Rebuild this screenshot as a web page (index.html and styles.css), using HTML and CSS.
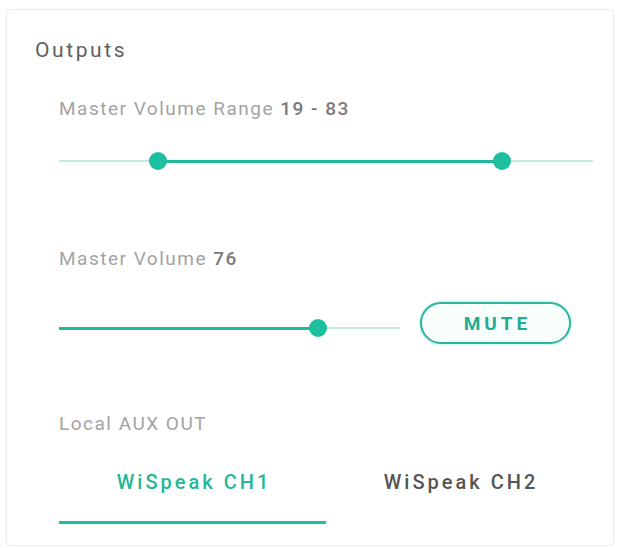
FILE: index.html
```html
<!DOCTYPE html>
<html>
<head>
<meta charset="utf-8">
<link rel="stylesheet" href="styles.css">
</head>
<body>
<div class="card">
  <div class="title">Outputs</div>
  <div class="section">
    <div class="label">Master Volume Range <b>19 - 83</b></div>
    <div class="slider range">
      <div class="track"></div>
      <div class="fill" style="left: 18.5%; width: 64.5%;"></div>
      <div class="thumb" style="left: 18.5%;"></div>
      <div class="thumb" style="left: 83%;"></div>
    </div>
  </div>
  <div class="section vol">
    <div class="label">Master Volume <b>76</b></div>
    <div class="vol-row">
      <div class="slider single">
        <div class="track"></div>
        <div class="fill" style="left: 0; width: 76%;"></div>
        <div class="thumb" style="left: 76%;"></div>
      </div>
      <button class="mute">MUTE</button>
    </div>
  </div>
  <div class="section aux">
    <div class="label">Local AUX OUT</div>
    <div class="tabs">
      <div class="tab active">WiSpeak CH1</div>
      <div class="tab">WiSpeak CH2</div>
    </div>
  </div>
</div>
</body>
</html>
```
FILE: styles.css
```css
* { box-sizing: border-box; }
html, body { margin: 0; padding: 0; background: #ffffff; }
body { font-family: Roboto, "Liberation Sans", sans-serif; }
.card {
  margin: 9px 6px 0 6px;
  width: 608px;
  height: 537px;
  border: 1px solid #ededed;
  border-radius: 4px;
  box-shadow: 0 1px 3px rgba(0,0,0,0.06);
  padding: 26px 20px 0 28px;
}
.title {
  font-size: 21px;
  line-height: 28px;
  letter-spacing: 2.6px;
  color: #606060;
}
.section { padding-left: 24px; }
.label {
  font-size: 19px;
  line-height: 24px;
  letter-spacing: 1.5px;
  color: #a3a3a3;
  margin-top: 33px;
}
.label b { font-weight: 500; color: #7a7a7a; }
.slider {
  position: relative;
  height: 20px;
}
.range { margin-top: 30px; width: 534px; }
.track {
  position: absolute;
  left: 0; right: 0; top: 9px;
  height: 2px;
  background: #c3eae0;
}
.fill {
  position: absolute;
  top: 8.5px;
  height: 3px;
  background: #1fb99a;
}
.thumb {
  position: absolute;
  top: 1px;
  width: 18px; height: 18px;
  margin-left: -9px;
  border-radius: 50%;
  background: #1dbf9e;
}
.vol .label { margin-top: 76px; }
.vol-row {
  display: flex;
  align-items: flex-start;
  margin-top: 31px;
}
.single { width: 341px; margin-top: 16px; }
.mute {
  margin-left: 20px;
  width: 151px;
  height: 42px;
  padding: 0 0 0 4px;
  border: 2.5px solid #2ab79c;
  border-radius: 21px;
  background: #f7fefc;
  color: #22ad92;
  font-family: Roboto, "Liberation Sans", sans-serif;
  font-size: 19px;
  font-weight: 700;
  letter-spacing: 4px;
  box-shadow: 0 0 3px rgba(31,191,159,0.45);
}
.aux .label { margin-top: 68px; }
.tabs {
  display: flex;
  width: 534px;
  margin-top: 19px;
}
.tab {
  flex: 1;
  text-align: center;
  font-size: 20px;
  line-height: 24px;
  font-weight: 500;
  letter-spacing: 3px;
  color: #555555;
  height: 69px;
  padding-top: 15px;
  padding-left: 3px;
  border-bottom: 3px solid transparent;
}
.tab.active {
  color: #26b697;
  border-bottom-color: #1fbf9f;
}
```
